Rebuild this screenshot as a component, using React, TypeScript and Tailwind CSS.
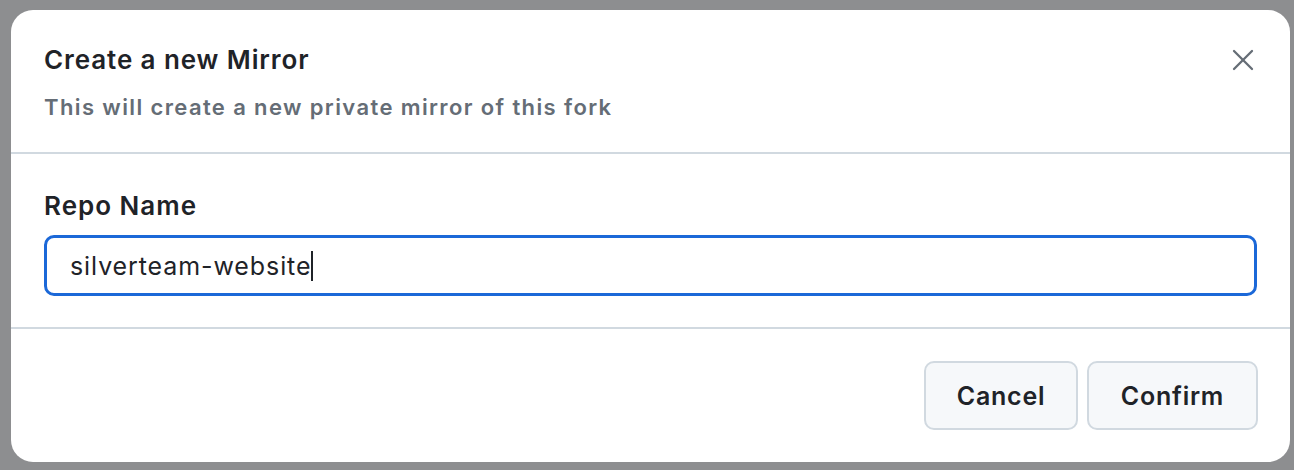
import React from "react";

function CloseIcon() {
  return (
    <svg width="24" height="24" viewBox="0 0 24 24" fill="none" stroke="#656d76" strokeWidth="2.3" strokeLinecap="round">
      <path d="M3 3 L21 21" />
      <path d="M21 3 L3 21" />
    </svg>
  );
}

export default function App() {
  return (
    <div
      className="w-[1294px] h-[470px] bg-[#8d8e90] pt-[10px] pl-[11px]"
      style={{ fontFamily: "Inter, 'Noto Sans', sans-serif" }}
    >
      <div className="w-[1279px] h-[452px] bg-white rounded-[22px] flex flex-col overflow-hidden">
        {/* header */}
        <div className="flex items-start justify-between pl-[33px] pr-[29px] pt-[32px] pb-[30px] border-b-2 border-[#d1d9e0]">
          <div className="flex flex-col gap-[14px]">
            <h1 className="text-[26px] leading-[36px] font-semibold tracking-[0.9px] text-[#1f2328]">
              Create a new Mirror
            </h1>
            <p className="text-[22px] leading-[30px] font-semibold tracking-[1.38px] text-[#656d76]">
              This will create a new private mirror of this fork
            </p>
          </div>
          <button className="w-[36px] h-[36px] flex items-center justify-center">
            <CloseIcon />
          </button>
        </div>

        {/* body */}
        <div className="flex flex-col gap-[11px] px-[33px] pt-[34px] pb-[31px] border-b-2 border-[#d1d9e0]">
          <label className="text-[26px] leading-[36px] font-semibold tracking-[1px] text-[#1f2328]">
            Repo Name
          </label>
          <div className="h-[61px] border-[3px] border-[#1b68d8] rounded-[10px] flex items-center pl-[23px]">
            <span className="text-[25px] tracking-[0.9px] text-[#1f2328] border-r-2 border-[#1f2328] leading-[30px]">
              silverteam-website
            </span>
          </div>
        </div>

        {/* footer */}
        <div className="flex justify-end gap-[9px] px-[32px] pt-[32px]">
          <button className="h-[69px] w-[154px] rounded-[10px] border-2 border-[#d1d9e0] bg-[#f6f8fa] pt-[3px] text-[25px] font-semibold tracking-[0.75px] text-[#1f2328]">
            Cancel
          </button>
          <button className="h-[69px] w-[171px] rounded-[10px] border-2 border-[#d1d9e0] bg-[#f6f8fa] pt-[3px] text-[25px] font-semibold tracking-[0.75px] text-[#1f2328]">
            Confirm
          </button>
        </div>
      </div>
    </div>
  );
}
